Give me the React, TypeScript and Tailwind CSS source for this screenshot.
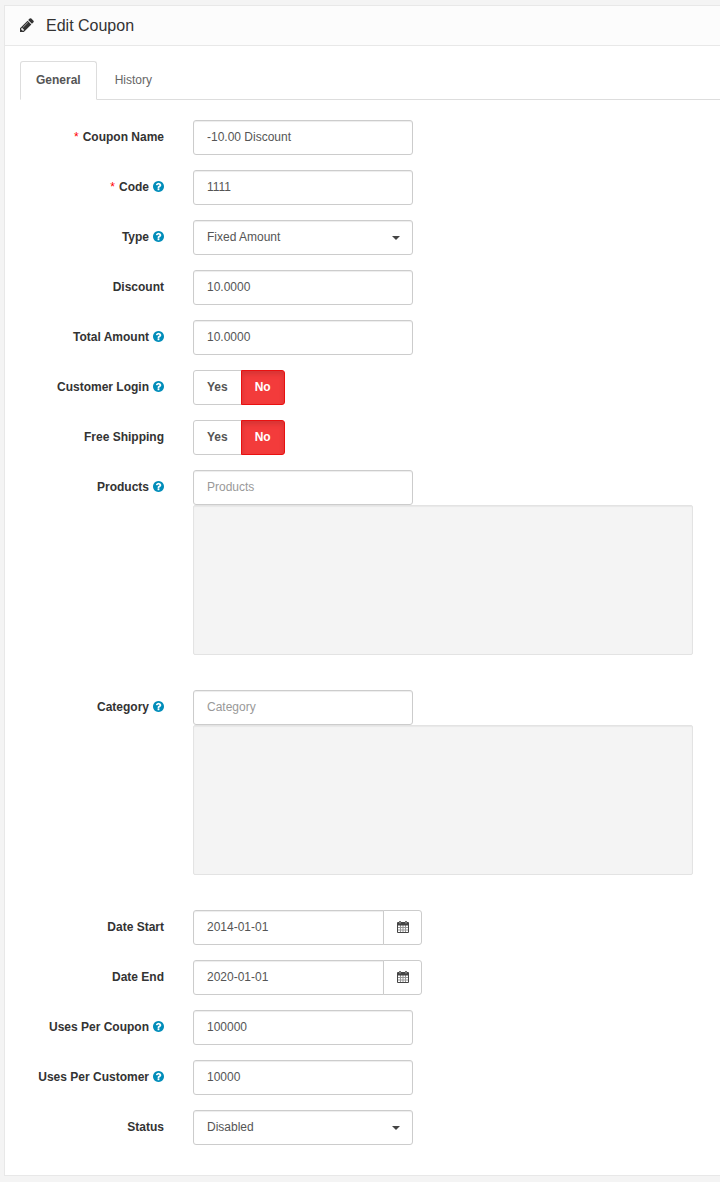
import { useState } from 'react';
import type { ReactNode } from 'react';

const controlClass =
  'h-[35px] w-full rounded-[3px] border border-[#ccc] bg-white px-[13px] text-[12px] text-[#555] shadow-[inset_0_1px_1px_rgba(0,0,0,0.075)] placeholder:text-[#999] focus:border-[#66afe9] focus:outline-none';

function PencilIcon() {
  return (
    <svg viewBox="0 128 1536 1536" className="mb-px h-[14px] w-[14px] shrink-0" fill="currentColor" aria-hidden="true">
      <path d="M363 1536l91-91-235-235-91 91v107h128v128h107zM886 608q0-22-22-22-10 0-17 7l-542 542q-7 7-7 17 0 22 22 22 10 0 17-7l542-542q7-7 7-17zM832 416l416 416-832 832h-416v-416zM1515 512q0 53-37 90l-166 166-416-416 166-165q36-38 90-38 53 0 91 38l235 234q37 39 37 91z" />
    </svg>
  );
}

function HelpIcon() {
  return (
    <svg viewBox="128 128 1536 1536" className="mb-[2px] h-[11px] w-[11px] shrink-0 text-[#008dba]" fill="currentColor" aria-hidden="true">
      <path d="M1024 1376v-192q0-14-9-23t-23-9h-192q-14 0-23 9t-9 23v192q0 14 9 23t23 9h192q14 0 23-9t9-23zm256-672q0-88-55.500-163t-138.500-116-170-41q-243 0-371 213-15 24 8 42l132 100q7 6 19 6 16 0 25-12 53-68 86-92 34-24 86-24 48 0 85.500 26t37.500 59q0 38-20 61t-68 45q-63 28-115.500 86.500t-52.500 125.500v36q0 14 9 23t23 9h192q14 0 23-9t9-23q0-19 21.500-49.500t54.500-49.500q32-18 49-28.500t46-35 44.500-48 28-60.500 12.500-81zm384 192q0 209-103 385.500t-279.500 279.500-385.500 103-385.500-103-279.500-279.500-103-385.500 103-385.500 279.500-279.500 385.500-103 385.500 103 279.500 279.500 103 385.500z" />
    </svg>
  );
}

function CalendarIcon() {
  return (
    <svg viewBox="0 0 12 12" className="h-3 w-3" fill="currentColor" aria-hidden="true">
      <path d="M2 1q0-1 1-1t1 1h4q0-1 1-1t1 1h1q1 0 1 1v2.500H0V2q0-1 1-1zM2.700 1v1.500h.6V1zM8.700 1v1.500h.6V1z" fillRule="evenodd" />
      <path d="M0 4h1v7h10V4h1v7q0 1-1 1H1q-1 0-1-1z" />
      <path d="M3 4h1v7H3zM5.500 4h1v7h-1zM8 4h1v7H8zM1 6h10v1H1zM1 8.500h10v1H1z" opacity="0.550" />
    </svg>
  );
}

type RowProps = {
  id: string;
  label: string;
  required?: boolean;
  help?: boolean;
  group?: boolean;
  children: ReactNode;
};

function Row({ id, label, required, help, group, children }: RowProps) {
  const caption = (
    <>
      {required && <span className="font-normal text-[#f00]">*</span>}
      {label}
      {help && <HelpIcon />}
    </>
  );
  const captionClass =
    'flex h-[35px] w-36 shrink-0 items-center justify-end gap-1 whitespace-nowrap text-right font-bold text-[#333]';
  return (
    <div className="flex items-start gap-[29px]">
      {group ? (
        <span id={id + '-label'} className={captionClass}>{caption}</span>
      ) : (
        <label htmlFor={id} className={captionClass}>{caption}</label>
      )}
      <div className="min-w-0 flex-1">{children}</div>
    </div>
  );
}

function TextField({ id, value, placeholder }: { id: string; value?: string; placeholder: string }) {
  return (
    <div className="max-w-[220px]">
      <input id={id} type="text" defaultValue={value} placeholder={placeholder} className={controlClass + ' pb-[2px]'} />
    </div>
  );
}

function SelectField({ id, value, options }: { id: string; value: string; options: string[] }) {
  return (
    <div className="relative max-w-[220px]">
      <select id={id} defaultValue={value} className={controlClass + ' appearance-none'}>
        {options.map((option) => (
          <option key={option}>{option}</option>
        ))}
      </select>
      <svg viewBox="0 0 8 4" className="pointer-events-none absolute top-4 right-[13px] h-1 w-2 text-[#444]" fill="currentColor" aria-hidden="true">
        <path d="M0 0h8L4 4z" />
      </svg>
    </div>
  );
}

function YesNo({ id }: { id: string }) {
  const optionClass =
    'relative flex h-[35px] cursor-pointer items-center border border-[#ccc] bg-white px-[13px] font-bold text-[#555] has-checked:z-10 has-checked:border-[#ea1010] has-checked:bg-[#f33b3b] has-checked:text-white has-checked:shadow-[inset_0_3px_5px_rgba(0,0,0,0.125)]';
  return (
    <div role="radiogroup" aria-labelledby={id + '-label'} className="flex">
      <label className={optionClass + ' rounded-l-[3px]'}>
        <input type="radio" name={id} value="1" className="sr-only" />
        Yes
      </label>
      <label className={optionClass + ' -ml-px rounded-r-[3px]'}>
        <input type="radio" name={id} value="0" defaultChecked className="sr-only" />
        No
      </label>
    </div>
  );
}

function PickerField({ id, placeholder }: { id: string; placeholder: string }) {
  return (
    <div className="mb-5">
      <TextField id={id} placeholder={placeholder} />
      <div className="mr-4 h-[150px] max-w-[500px] overflow-auto rounded-[2px] border border-[#e3e3e3] bg-[#f4f4f4] shadow-[inset_0_1px_1px_rgba(0,0,0,0.05)]" />
    </div>
  );
}

function DateField({ id, value }: { id: string; value: string }) {
  return (
    <div className="flex max-w-[229px]">
      <input id={id} type="text" defaultValue={value} className={controlClass + ' min-w-0 rounded-r-none pb-[2px]'} />
      <button
        type="button"
        aria-label="Choose date"
        className="-ml-px flex h-[35px] w-[39px] shrink-0 items-center justify-center rounded-r-[3px] border border-[#ccc] bg-white pb-px text-[#444]"
      >
        <CalendarIcon />
      </button>
    </div>
  );
}

function Tab({ label, active, onSelect }: { label: string; active: boolean; onSelect: () => void }) {
  return (
    <button
      type="button"
      role="tab"
      aria-selected={active}
      onClick={onSelect}
      className={
        active
          ? '-mb-px h-[39px] rounded-t-[3px] border border-[#ddd] border-b-white bg-white px-[15px] font-bold text-[#555]'
          : '-mb-px h-[39px] border border-transparent px-[15px] text-[#666]'
      }
    >
      {label}
    </button>
  );
}

export default function App() {
  const [tab, setTab] = useState('General');
  return (
    <main className="min-h-screen bg-[#f4f4f4] pt-[5px] pb-[6px] pl-1 font-['Liberation_Sans',Arial,sans-serif] text-[12px] leading-[17px] text-[#666]">
      <section className="border border-r-0 border-[#e8e8e8] bg-white">
        <header className="flex h-10 items-center gap-3 border-b border-[#e8e8e8] bg-[#fcfcfc] px-[15px] text-[#333]">
          <PencilIcon />
          <h1 className="text-[16px] leading-5">Edit Coupon</h1>
        </header>
        <div className="py-[15px] pl-[15px]">
          <div role="tablist" className="mb-5 flex gap-[2px] border-b border-[#ddd]">
            <Tab label="General" active={tab === 'General'} onSelect={() => setTab('General')} />
            <Tab label="History" active={tab === 'History'} onSelect={() => setTab('History')} />
          </div>
          {tab === 'General' && (
            <form className="flex flex-col gap-[15px] pb-[15px]">
              <Row id="name" label="Coupon Name" required>
                <TextField id="name" value="-10.00 Discount" placeholder="Coupon Name" />
              </Row>
              <Row id="code" label="Code" required help>
                <TextField id="code" value="1111" placeholder="Code" />
              </Row>
              <Row id="type" label="Type" help>
                <SelectField id="type" value="Fixed Amount" options={['Percentage', 'Fixed Amount']} />
              </Row>
              <Row id="discount" label="Discount">
                <TextField id="discount" value="10.0000" placeholder="Discount" />
              </Row>
              <Row id="total" label="Total Amount" help>
                <TextField id="total" value="10.0000" placeholder="Total Amount" />
              </Row>
              <Row id="logged" label="Customer Login" help group>
                <YesNo id="logged" />
              </Row>
              <Row id="shipping" label="Free Shipping" group>
                <YesNo id="shipping" />
              </Row>
              <Row id="products" label="Products" help>
                <PickerField id="products" placeholder="Products" />
              </Row>
              <Row id="category" label="Category" help>
                <PickerField id="category" placeholder="Category" />
              </Row>
              <Row id="date-start" label="Date Start">
                <DateField id="date-start" value="2014-01-01" />
              </Row>
              <Row id="date-end" label="Date End">
                <DateField id="date-end" value="2020-01-01" />
              </Row>
              <Row id="uses-total" label="Uses Per Coupon" help>
                <TextField id="uses-total" value="100000" placeholder="Uses Per Coupon" />
              </Row>
              <Row id="uses-customer" label="Uses Per Customer" help>
                <TextField id="uses-customer" value="10000" placeholder="Uses Per Customer" />
              </Row>
              <Row id="status" label="Status">
                <SelectField id="status" value="Disabled" options={['Enabled', 'Disabled']} />
              </Row>
            </form>
          )}
        </div>
      </section>
    </main>
  );
}
